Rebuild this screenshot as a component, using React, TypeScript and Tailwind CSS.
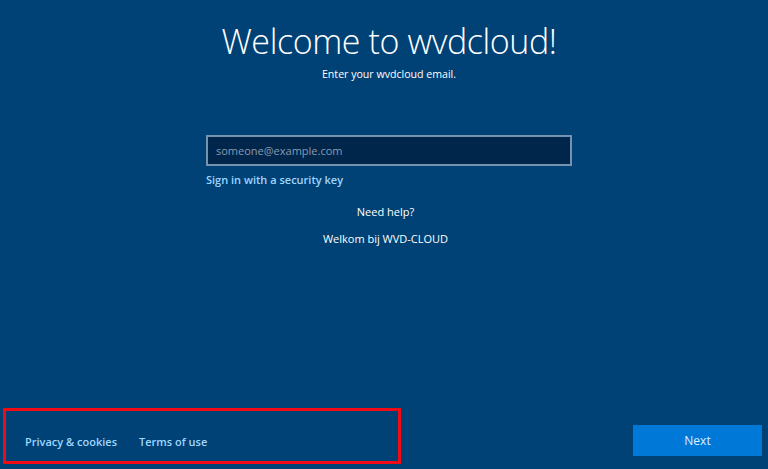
export default function App() {
  return (
    <div
      className="relative flex h-screen w-full flex-col bg-[#004275] text-white"
      style={{ fontFamily: '"Open Sans", "Noto Sans", sans-serif' }}
    >
      <main className="ml-[206px] flex w-[366px] flex-col items-center pt-[20px]">
        <h1 className="text-[34px] font-light leading-[42px] tracking-[-0.4px] whitespace-nowrap">
          Welcome to wvdcloud!
        </h1>
        <p className="mt-[5px] text-[10.6px] leading-[14px]">Enter your wvdcloud email.</p>

        <input
          type="email"
          placeholder="someone@example.com"
          className="mt-[54px] h-[31px] w-full border-2 border-[#7592b0] bg-[#00264b] px-[8px] text-[11px] text-white outline-none placeholder:text-[#8a9bb0]"
        />
        <a href="#" className="mt-[6px] self-start text-[11px] font-semibold leading-[15px] text-[#9fd6ff]">
          Sign in with a security key
        </a>
        <p className="mt-[18px] pr-[7px] text-[11px] leading-[14px]">Need help?</p>
        <p className="mt-[13px] pr-[7px] text-[11px] leading-[14px]">Welkom bij WVD-CLOUD</p>
      </main>

      <footer className="mt-auto flex items-end justify-between pb-[13px] pr-[6px]">
        <div className="mb-[-8px] ml-[3px] flex h-[56px] w-[398px] items-center gap-[22px] border-[3px] border-[#f20a14] pl-[19px] pt-[12px]">
          <a href="#" className="text-[11px] font-semibold text-[#9fd6ff]">Privacy &amp; cookies</a>
          <a href="#" className="text-[11px] font-semibold text-[#9fd6ff]">Terms of use</a>
        </div>
        <button className="h-[31px] w-[129px] bg-[#0078d7] text-[12px] text-[#dcefff]">Next</button>
      </footer>
    </div>
  );
}
